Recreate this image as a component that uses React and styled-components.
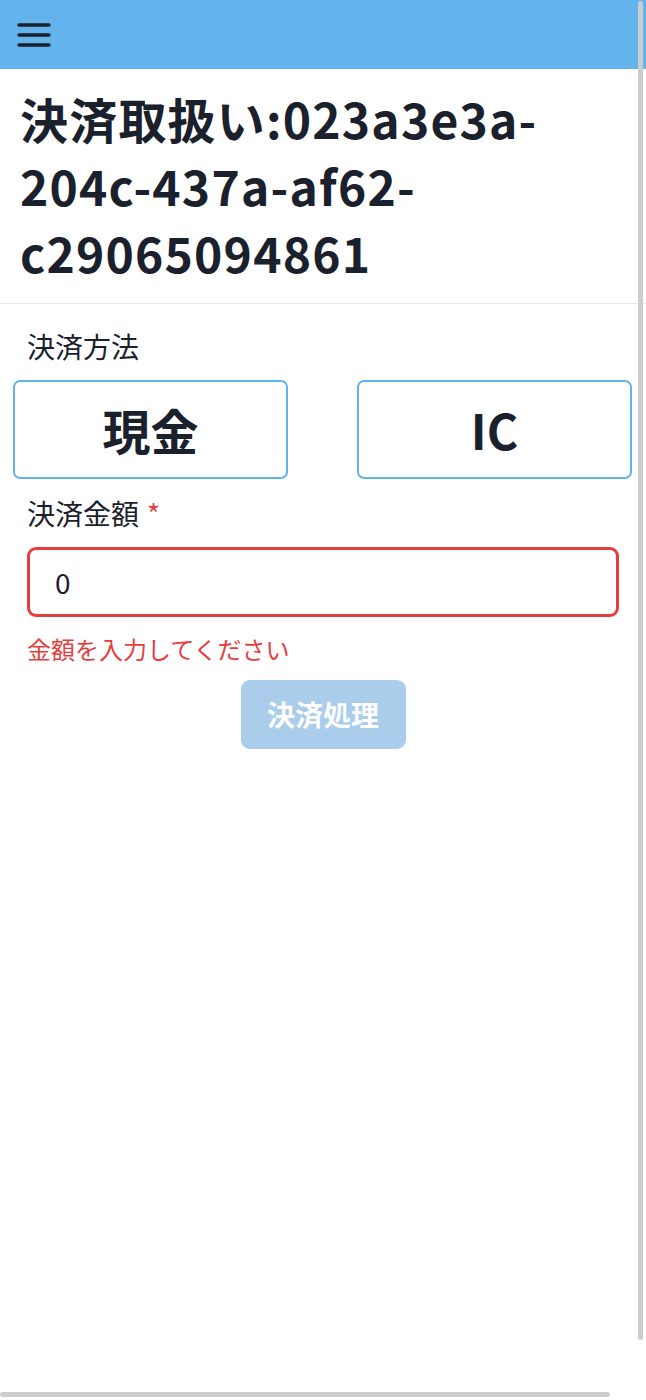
import React, { useState } from 'react';
import styled, { createGlobalStyle } from 'styled-components';
import { FiMenu } from 'react-icons/fi';

const colors = {
    blue: '#63b3ed',
    text: '#1a202c',
    red: '#e53e3e',
    border: '#e2e8f0',
    disabled: '#abcdec',
    thumb: '#cdcdcd',
};

const GlobalStyle = createGlobalStyle`
    html, body {
        margin: 0;
        padding: 0;
        background: #ffffff;
    }
    body {
        font-family: "Noto Sans CJK JP", "Noto Sans", sans-serif;
        color: ${colors.text};
    }
    * {
        box-sizing: border-box;
    }
`;

const methods = ['現金', 'IC'];

const App = () => {
    const [method, setMethod] = useState(null);
    const [amount, setAmount] = useState('0');
    const invalid = !Number(amount);

    return (
        <Page>
            <GlobalStyle />
            <Header>
                <MenuButton aria-label="menu">
                    <FiMenu size={40} color={colors.text} />
                </MenuButton>
            </Header>
            <Title>決済取扱い:023a3e3a-204c-437a-af62-c29065094861</Title>
            <Form>
                <Field>
                    <Label>決済方法</Label>
                </Field>
                <MethodRow>
                    {methods.map((m) => (
                        <MethodButton key={m} selected={method === m} onClick={() => setMethod(m)}>
                            {m}
                        </MethodButton>
                    ))}
                </MethodRow>
                <Field>
                    <Label>
                        決済金額<Required>*</Required>
                    </Label>
                </Field>
                <Field>
                    <AmountInput
                        invalid={invalid}
                        value={amount}
                        onChange={(e) => setAmount(e.target.value)}
                    />
                </Field>
                {invalid && (
                    <Field>
                        <ErrorText>金額を入力してください</ErrorText>
                    </Field>
                )}
                <SubmitRow>
                    <SubmitButton disabled={invalid || !method}>決済処理</SubmitButton>
                </SubmitRow>
            </Form>
            <ScrollThumbV />
            <ScrollThumbH />
        </Page>
    );
};

const Page = styled.div`
    min-height: 1400px;
    background: #ffffff;
`;

const Header = styled.header`
    display: flex;
    align-items: center;
    height: 69px;
    padding: 0 14px;
    background-color: ${colors.blue};
`;

const MenuButton = styled.button`
    display: flex;
    align-items: center;
    justify-content: center;
    padding: 0;
    border: none;
    background: none;
    cursor: pointer;
`;

const Title = styled.h1`
    margin: 0;
    padding: 16px 20px;
    font-size: 48px;
    font-weight: 700;
    line-height: 1.4;
    letter-spacing: 1.2px;
    color: ${colors.text};
    border-bottom: 1px solid ${colors.border};
`;

const Form = styled.div`
    display: flex;
    flex-direction: column;
    gap: 14px;
    padding-top: 22px;
`;

const Field = styled.div`
    padding: 0 27px;
`;

const Label = styled.div`
    font-size: 28px;
    line-height: normal;
    color: ${colors.text};
`;

const Required = styled.span`
    margin-left: 8px;
    color: ${colors.red};
`;

const MethodRow = styled.div`
    display: flex;
    justify-content: space-between;
    padding: 0 14px 0 13px;
`;

const MethodButton = styled.button`
    width: 275px;
    height: 99px;
    border: 2px solid ${colors.blue};
    border-radius: 7px;
    background: ${(props) => (props.selected ? '#ebf8ff' : '#ffffff')};
    font-family: inherit;
    font-size: 48px;
    font-weight: 700;
    color: ${colors.text};
    cursor: pointer;
`;

const AmountInput = styled.input`
    display: block;
    width: 100%;
    height: 70px;
    padding: 0 25px;
    border: 3px solid ${(props) => (props.invalid ? colors.red : colors.blue)};
    border-radius: 9px;
    font-family: inherit;
    font-size: 28px;
    color: ${colors.text};
    outline: none;
`;

const ErrorText = styled.div`
    font-size: 24px;
    line-height: normal;
    color: ${colors.red};
`;

const SubmitRow = styled.div`
    display: flex;
    justify-content: center;
`;

const SubmitButton = styled.button`
    width: 165px;
    height: 69px;
    border: none;
    border-radius: 9px;
    background-color: ${(props) => (props.disabled ? colors.disabled : colors.blue)};
    font-family: inherit;
    font-size: 28px;
    font-weight: 700;
    color: #ffffff;
`;

const ScrollThumbV = styled.div`
    position: fixed;
    top: 1px;
    right: 3px;
    width: 5px;
    height: 1339px;
    border-radius: 3px;
    background-color: ${colors.thumb};
`;

const ScrollThumbH = styled.div`
    position: fixed;
    left: 0;
    bottom: 3px;
    width: 610px;
    height: 5px;
    border-radius: 3px;
    background-color: ${colors.thumb};
`;

export default App;
